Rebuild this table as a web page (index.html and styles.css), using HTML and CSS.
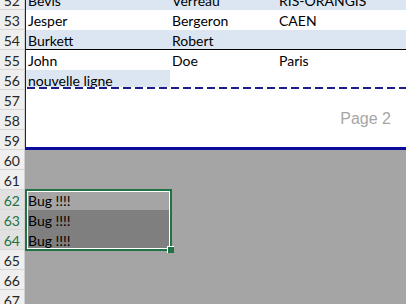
FILE: index.html
```html
<!DOCTYPE html>
<html lang="fr">
<head>
    <meta charset="UTF-8">
    <title>Feuil1 - aperçu des sauts de page</title>
    <meta name="viewport" content="width=device-width, initial-scale=1">
    <link rel="stylesheet" href="styles.css">
</head>
<body>
    <div class="sheet">
        <!-- row numbers -->
        <div class="rownums">
            <div class="rn">52</div>
            <div class="rn">53</div>
            <div class="rn">54</div>
            <div class="rn">55</div>
            <div class="rn">56</div>
            <div class="rn">57</div>
            <div class="rn">58</div>
            <div class="rn">59</div>
            <div class="rn">60</div>
            <div class="rn">61</div>
            <div class="rn sel-rn">62</div>
            <div class="rn sel-rn">63</div>
            <div class="rn sel-rn">64</div>
            <div class="rn">65</div>
            <div class="rn">66</div>
            <div class="rn">67</div>
        </div>

        <div class="grid">
            <!-- printed page area -->
            <div class="page">
                <div class="tr band"><span class="c col-a">Bevis</span><span class="c col-b">Verreau</span><span class="c col-c">RIS-ORANGIS</span></div>
                <div class="tr"><span class="c col-a">Jesper</span><span class="c col-b">Bergeron</span><span class="c col-c">CAEN</span></div>
                <div class="tr band total"><span class="c col-a">Burkett</span><span class="c col-b">Robert</span><span class="c col-c"></span></div>
                <div class="tr"><span class="c col-a">John</span><span class="c col-b">Doe</span><span class="c col-c">Paris</span></div>
                <div class="tr pagebreak"><span class="c col-a new-cell">nouvelle ligne</span></div>
                <div class="tr"></div>
                <div class="tr"><span class="page-label">Page 2</span></div>
                <div class="tr last"></div>
            </div>

            <!-- outside the print area -->
            <div class="outside">
                <div class="selection">
                    <div class="sr"><span class="c">Bug !!!!</span></div>
                    <div class="sr hl"><span class="c">Bug !!!!</span></div>
                    <div class="sr hl"><span class="c">Bug !!!!</span></div>
                    <span class="handle"></span>
                </div>
            </div>
        </div>
    </div>
</body>
</html>
```

FILE: styles.css
```css
* { box-sizing: border-box; }
body { margin: 0; overflow: hidden; background: #a5a5a5; font-family: Lato, "Liberation Sans", sans-serif; font-size: 14px; color: #000; }

.sheet { display: flex; margin-top: -10px; }

/* row headers */
.rownums { width: 25px; flex: none; background: #efefef; border-right: 1px solid #cfcfcf; }
.rn { height: 20px; line-height: 20px; padding-top: 1px; padding-right: 4px; text-align: right; border-bottom: 1px solid #d8d8d8; color: #262626; }
.sel-rn { background: #e1e1e1; color: #217346; }

.grid { flex: 1; min-width: 0; }

/* page view */
.page { background: #fff; border-left: 1px solid #15158f; border-bottom: 3px solid #0c0c9a; }
.tr { display: flex; height: 20px; line-height: 20px; white-space: nowrap; }
.tr.last { height: 17px; }
.band { background: #dce6f2; }
.total { border-bottom: 1px solid #000; }
.c { display: block; padding: 1px 0 0 2px; overflow: hidden; }
.col-a { width: 144px; flex: none; }
.col-b { width: 106px; flex: none; }
.col-c { flex: 1; padding-left: 3px; }

.pagebreak {
    background: repeating-linear-gradient(to right, #1d1d8c 0 8px, transparent 8px 12px) 1px 17px / 100% 2px no-repeat;
}
.new-cell { background: #dce6f2; height: 17px; }

.page-label { flex: 1; text-align: right; padding-right: 15px; font-family: "Liberation Sans", Arial, sans-serif; font-size: 16px; line-height: 17px; color: #a6a6a6; }

/* grey area and current selection */
.outside { height: 160px; padding-top: 40px; }
.selection { position: relative; width: 146px; height: 60px; }
.selection::after { content: ""; position: absolute; top: -1px; right: -1px; bottom: -1px; left: 0; border: 2px solid #217346; box-shadow: inset 0 0 0 1px #fff; }
.sr { height: 20px; line-height: 20px; }
.sr.hl { background: #7f7f7f; }
.sr .c { padding-left: 3px; }
.handle { position: absolute; z-index: 1; right: -3px; bottom: -3px; width: 7px; height: 7px; background: #217346; border-top: 1px solid #fff; border-left: 1px solid #fff; }
```
